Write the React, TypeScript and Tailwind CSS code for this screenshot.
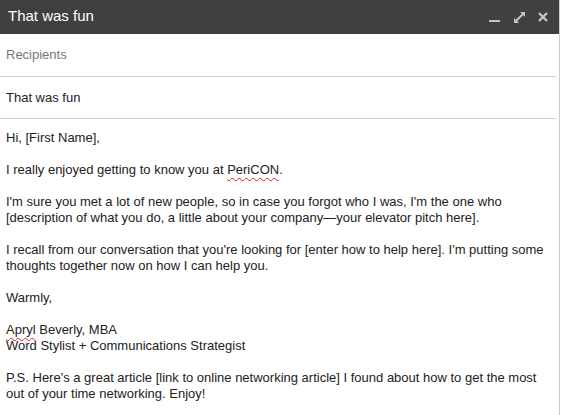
import React from 'react';

const Squiggle = ({ children }: { children: React.ReactNode }) => (
    <span className="underline decoration-wavy decoration-[#e02020] decoration-1 underline-offset-[3px]">{children}</span>
);

export default function App() {
    return (
        <div className="w-[561px] h-[415px] bg-white overflow-hidden font-['Liberation_Sans',Arial,sans-serif]">
            <div className="w-[560px] h-full border-r border-[#cccccc] flex flex-col">
                {/* Header */}
                <div className="h-[34px] bg-[#404040] flex items-center justify-between pl-[8px] pr-[11px] shrink-0">
                    <span className="text-white text-[15px] leading-none mb-[3px]">That was fun</span>
                    <div className="flex items-center text-[#c4c4c4]">
                        <svg width="11" height="12" viewBox="0 0 11 12" className="mr-[14px]">
                            <rect x="0" y="9" width="11" height="2" fill="currentColor" />
                        </svg>
                        <svg width="11" height="11" viewBox="0 0 11 11" className="mr-[13px]">
                            <polygon points="6,0 11,0 11,5" fill="currentColor" />
                            <polygon points="0,6 0,11 5,11" fill="currentColor" />
                            <line x1="2" y1="9" x2="9" y2="2" stroke="currentColor" strokeWidth="2" />
                        </svg>
                        <svg width="10" height="10" viewBox="0 0 10 10">
                            <path d="M1 1 L9 9 M9 1 L1 9" stroke="currentColor" strokeWidth="2.4" />
                        </svg>
                    </div>
                </div>

                {/* Recipients */}
                <div className="h-[43px] mr-[3px] border-b border-[#cfcfcf] flex items-center px-[6px] text-[13px] text-[#777777] shrink-0">
                    Recipients
                </div>

                {/* Subject */}
                <div className="h-[42px] mr-[3px] border-b border-[#cfcfcf] flex items-center px-[6px] text-[13px] text-[#222222] shrink-0">
                    That was fun
                </div>

                {/* Body */}
                <div className="px-[6px] pt-[11px] text-[13px] leading-[16px] text-[#222222] whitespace-nowrap">
                    <p>Hi, [First Name],</p>
                    <br />
                    <p>I really enjoyed getting to know you at <Squiggle>PeriCON</Squiggle>.</p>
                    <br />
                    <p>
                        I'm sure you met a lot of new people, so in case you forgot who I was, I'm the one who
                        <br />
                        [description of what you do, a little about your company—your elevator pitch here].
                    </p>
                    <br />
                    <p>
                        I recall from our conversation that you're looking for [enter how to help here]. I'm putting some
                        <br />
                        thoughts together now on how I can help you.
                    </p>
                    <br />
                    <p>Warmly,</p>
                    <br />
                    <p>
                        <Squiggle>Apryl</Squiggle> Beverly, MBA
                        <br />
                        Word Stylist + Communications Strategist
                    </p>
                    <br />
                    <p>
                        P.S. Here's a great article [link to online networking article] I found about how to get the most
                        <br />
                        out of your time networking. Enjoy!
                    </p>
                </div>
            </div>
        </div>
    );
}
